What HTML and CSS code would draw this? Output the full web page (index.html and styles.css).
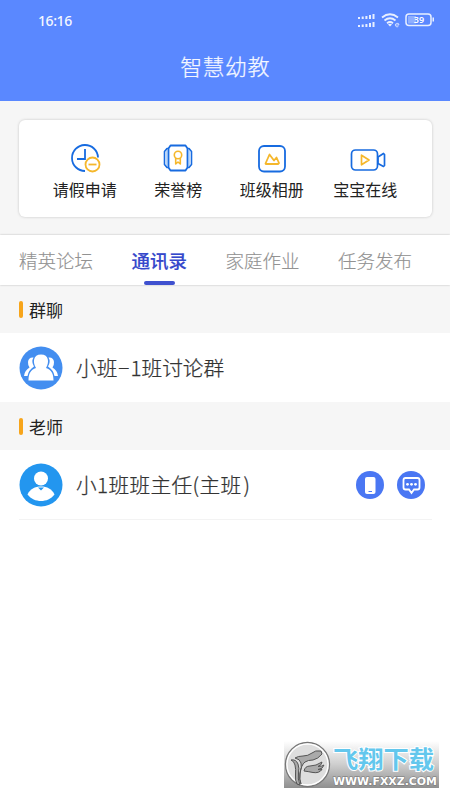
FILE: index.html
```html
<!DOCTYPE html>
<html lang="zh-CN">
<head>
<meta charset="utf-8">
<title>智慧幼教</title>
<link rel="stylesheet" href="styles.css">
</head>
<body>
<header class="header">
  <div class="status">
    <span class="time">16:16</span>
    <svg class="status-icons" width="80" height="20" viewBox="0 0 80 20">
      <g fill="#e8efff">
        <path d="M1 7h2v2H1zM4.700 6.500h2V9h-2zM8.400 6h2v3h-2zM12 5h2v4h-2zM15.500 4h2v5h-2z"/>
        <path d="M1 15h2v2H1zM4.700 14.500h2V17h-2zM8.400 14h2v3h-2zM12 13h2v4h-2zM15.500 12h2v5h-2z"/>
      </g>
      <g fill="none" stroke="#e8efff" stroke-width="1.800">
        <path d="M25 7.500q8-6.500 16 0M27.500 10.500q5.500-4.500 11 0M30 13.200q3-2.400 6 0"/>
        <rect x="49" y="4" width="25" height="11.500" rx="3" stroke-width="1.500"/>
        <path d="M38.500 15h3.500a1.800 1.800 0 1 0-.7 1.500" stroke-width=".8"/>
      </g>
      <path d="M31 14.500q2-1.500 4 0l-2 2zM75.500 7.500h1.500v4h-1.500z" fill="#e8efff"/>
      <rect x="51" y="6" width="8" height="7.500" fill="#8fafff"/>
      <text class="battery" x="62" y="13.200" text-anchor="middle">39</text>
    </svg>
  </div>
  <h1 class="title">智慧幼教</h1>
</header>
<main>
  <section class="shortcuts">
    <div class="card">
      <div class="shortcut">
        <svg width="36" height="32" viewBox="0 0 36 32" fill="none" stroke-width="1.800">
          <path d="M31 15.500A13 13 0 1 0 18 29" stroke="#176be0"/>
          <path d="M18 7v10h-8" stroke="#176be0"/>
          <circle cx="25.500" cy="22.500" r="7" stroke="#f5b72b"/><path d="M21.500 22.500h8" stroke="#f5b72b"/>
        </svg>
        <span>请假申请</span>
      </div>
      <div class="shortcut">
        <svg width="36" height="32" viewBox="0 0 36 32" fill="none" stroke-width="1.600" stroke-linejoin="round">
          <path d="M10.500 3.500h15l2 3v19l-2 3h-15l-2-3v-19z" stroke="#176be0" stroke-width="1.800"/>
          <path d="M8.500 6.500H7l-2.500 3v13l2.500 3h1.500M27.500 6.500H29l2.500 3v13l-2.500 3h-1.500" stroke="#176be0"/>
          <path d="M7 8v16M29 8v16" stroke="#75aef5" stroke-width="1"/>
          <circle cx="18" cy="13" r="3.700" stroke="#f5b72b"/><path d="M15.700 16v6l2.300-2 2.300 2v-6" stroke="#f5b72b"/>
        </svg>
        <span>荣誉榜</span>
      </div>
      <div class="shortcut">
        <svg width="36" height="32" viewBox="0 0 36 32" fill="none" stroke-width="1.800" stroke-linejoin="round">
          <rect x="5" y="4" width="26" height="25.500" rx="5" stroke="#176be0"/>
          <path d="M11.500 21.500l4-9 4.500 6 2.500-3 2.500 5.500-1 1H12z" stroke="#f5b72b"/>
        </svg>
        <span>班级相册</span>
      </div>
      <div class="shortcut">
        <svg width="36" height="32" viewBox="0 0 36 32" fill="none" stroke-width="1.700" stroke-linejoin="round">
          <rect x="4.500" y="8" width="26" height="20" rx="4" stroke="#176be0"/>
          <path d="M31 15l5.500-3.500 1 1v11l-1 1L31 21.500z" stroke="#176be0"/>
          <path d="M14.500 13.200l7.500 4.800-7.500 4.800z" stroke="#f5b72b"/>
        </svg>
        <span>宝宝在线</span>
      </div>
    </div>
  </section>
  <nav class="tabs">
    <span class="tab">精英论坛</span>
    <span class="tab active">通讯录</span>
    <span class="tab">家庭作业</span>
    <span class="tab">任务发布</span>
  </nav>
  <h2 class="group">群聊</h2>
  <div class="row">
    <svg class="avatar" width="44" height="44" viewBox="0 0 44 44">
      <circle cx="22" cy="22" r="21.500" fill="#438ef0"/>
      <g fill="#fff">
        <path d="M14.500 11.500q-5-.5-5.500 4.500-.2 3 1.500 5.500-5 3-5.500 8.500h3.500q1-6 6.500-9.500-3-5-.5-9z"/>
        <path d="M29.500 11.500q5-.5 5.500 4.500.2 3-1.500 5.500 5 3 5.500 8.500h-3.500q-1-6-6.500-9.500 3-5 .5-9z"/>
        <path d="M22 8.500c-8 0-8.500 8-5 13.500-5.500 2-7.500 5.500-7.500 12.500h25c0-7-2-10.500-7.500-12.500 3.500-5.500 3-13.500-5-13.500z"/>
      </g>
    </svg>
    <span class="name">小班<span class="dash">−</span>1班讨论群</span>
  </div>
  <h2 class="group">老师</h2>
  <div class="row teacher">
    <svg class="avatar" width="44" height="44" viewBox="0 0 44 44">
      <circle cx="22" cy="22" r="21.500" fill="#2396ef"/>
      <circle cx="22" cy="15.500" r="7" fill="#fff"/>
      <path d="M8.500 31.500C11 26 16 23.500 22 23.500S33 26 35.500 31.500C32 36 27 38 22 38S12 36 8.500 31.500z" fill="#fff"/>
      <path d="M19 24.500h6L22 27.500z" fill="#2396ef"/>
    </svg>
    <span class="name spaced">小1班班主任(主班<span class="close">)</span></span>
    <span class="actions">
      <svg width="28" height="28" viewBox="0 0 28 28"><circle cx="14" cy="14" r="14" fill="#4a77f3"/><rect x="9" y="6" width="10.500" height="17" rx="2" fill="#fff"/><path d="M12.500 20.500h3.500" stroke="#4a77f3"/></svg>
      <svg width="28" height="28" viewBox="0 0 28 28"><circle cx="14" cy="14" r="14" fill="#4a77f3"/><path d="M8.500 7h12q2 0 2 2v7.500q0 2-2 2h-3.500L14.500 22 12 18.500H8.500q-2 0-2-2V9q0-2 2-2z" fill="none" stroke="#fff" stroke-width="1.800"/><g fill="#fff"><circle cx="10.500" cy="13.300" r="1.400"/><circle cx="14.500" cy="13.300" r="1.400"/><circle cx="18.500" cy="13.300" r="1.400"/></g></svg>
    </span>
  </div>
</main>
<div class="watermark">
  <svg width="155" height="47" viewBox="0 0 155 47">
    <circle cx="23.500" cy="23.500" r="22" fill="#dedede" stroke="#777" stroke-width="1.300"/>
    <circle cx="23.500" cy="23.500" r="20.500" fill="none" stroke="#fff" stroke-width="1.300"/>
    <g fill="#aaa" stroke="#555" stroke-linejoin="round">
      <path d="M13 43q-2-3-1.500-9 .5-6-.5-10-1-4-4-5 5-1 7 4 1.500 4 .5 9-1 6 1.500 12z"/>
      <path d="M17 43q-2-4-1-10 1-9 5-12 3-2 8-2 5-1 9-6l-1-3q-6-1-9 2-4 3-9 3-5 0-8 2 5 1 6 5 1 4-1 10-1 6 1 11z"/>
      <path d="M20 30q1-5 6-5 6 0 12-4 0 3-4 4.500 4 0 6-1.500-1 4-6 4.500 2 .5 4 0-3 4-9 3-5-1-9-1.500z"/>
    </g>
    <text class="brand" x="49" y="26.500" textLength="101" lengthAdjust="spacingAndGlyphs">飞翔下载</text>
    <text class="site" x="49" y="43.500" textLength="104" lengthAdjust="spacingAndGlyphs">WWW.FXXZ.COM</text>
  </svg>
</div>
</body>
</html>
```

FILE: styles.css
```css
* { box-sizing: border-box; }
body {
  margin: 0;
  height: 800px;
  overflow: hidden;
  position: relative;
  background: #fff;
  color: #222;
  font-family: "Noto Sans CJK SC", sans-serif;
}
svg { display: block; flex-shrink: 0; overflow: visible; }
.header { height: 101px; background: #5a88ff; color: #f4f7ff; }
.status {
  height: 40px;
  padding: 0 13px 0 38px;
  display: flex;
  align-items: center;
  justify-content: space-between;
}
.time { font: 500 14px "Noto Sans", sans-serif; letter-spacing: -0.4px; }
.battery { font: 600 9px "Noto Sans", sans-serif; fill: #fff; }
.title {
  margin: 9px 0 0;
  text-align: center;
  font-size: 22px;
  line-height: 32px;
  font-weight: 300;
  letter-spacing: 0.4px;
  -webkit-text-stroke: 0.25px currentColor;
}
.shortcuts { height: 134px; padding: 19px 18px 0 19px; background: #f6f6f6; }
.card {
  height: 97px;
  padding: 22px 20px 0 19px;
  display: grid;
  grid-template-columns: repeat(4, 1fr);
  background: #fff;
  border-radius: 6px;
  box-shadow: 0 0 3px rgba(0, 0, 0, 0.2);
}
.shortcut {
  display: flex;
  flex-direction: column;
  align-items: center;
  gap: 3px;
  font-size: 16px;
  line-height: 24px;
  white-space: nowrap;
}
.tabs {
  height: 50px;
  padding: 0 38px 0 19px;
  display: flex;
  justify-content: space-between;
  background: #fff;
  box-shadow: 0 0 2px rgba(0, 0, 0, 0.25);
  position: relative;
  font-size: 18.5px;
  line-height: 50px;
  color: #929292;
  font-weight: 300;
  -webkit-text-stroke: 0.15px currentColor;
}
.active {
  color: #3548cb;
  font-weight: 500;
  display: flex;
  flex-direction: column;
  align-items: center;
}
.active::after {
  content: "";
  width: 31px;
  height: 4px;
  margin-top: -4px;
  border-radius: 2px;
  background: #3f51cf;
  flex-shrink: 0;
}
.group {
  margin: 0;
  height: 48px;
  padding: 0 19px;
  display: flex;
  align-items: center;
  gap: 6px;
  background: #f6f6f6;
  font-size: 17px;
  font-weight: 400;
}
.group::before {
  content: "";
  width: 4px;
  height: 17px;
  border-radius: 2px;
  background: #f7a51b;
}
.row { height: 69px; margin: 0 18px 0 19px; display: flex; align-items: center; }
.teacher { height: 70px; border-bottom: 1px solid #f3f3f3; }
.name {
  margin-left: 13px;
  padding-bottom: 1px;
  font-size: 20.700px;
  font-weight: 300;
  color: #333;
  white-space: nowrap;
  -webkit-text-stroke: 0.25px currentColor;
}
.spaced { letter-spacing: 0.35px; }
.dash { display: inline-block; width: 13px; text-align: center; }
.close { margin-left: 2px; }
.actions { display: flex; gap: 13px; margin: 0 7px 0 auto; }
.watermark {
  position: absolute;
  left: 284px;
  top: 741px;
  width: 155px;
  height: 47px;
  background: linear-gradient(#fff, #cecece 50%, #8f8f8f);
}
.brand {
  font: 700 24px/1 "Noto Sans CJK SC", sans-serif;
  fill: #63c7ed;
  stroke: #fff;
  stroke-width: 2px;
  paint-order: stroke;
}
.site {
  font: 700 10px/1 "DejaVu Sans", sans-serif;
  fill: #fff;
  stroke: #777;
  stroke-width: 1px;
  paint-order: stroke;
}
```
